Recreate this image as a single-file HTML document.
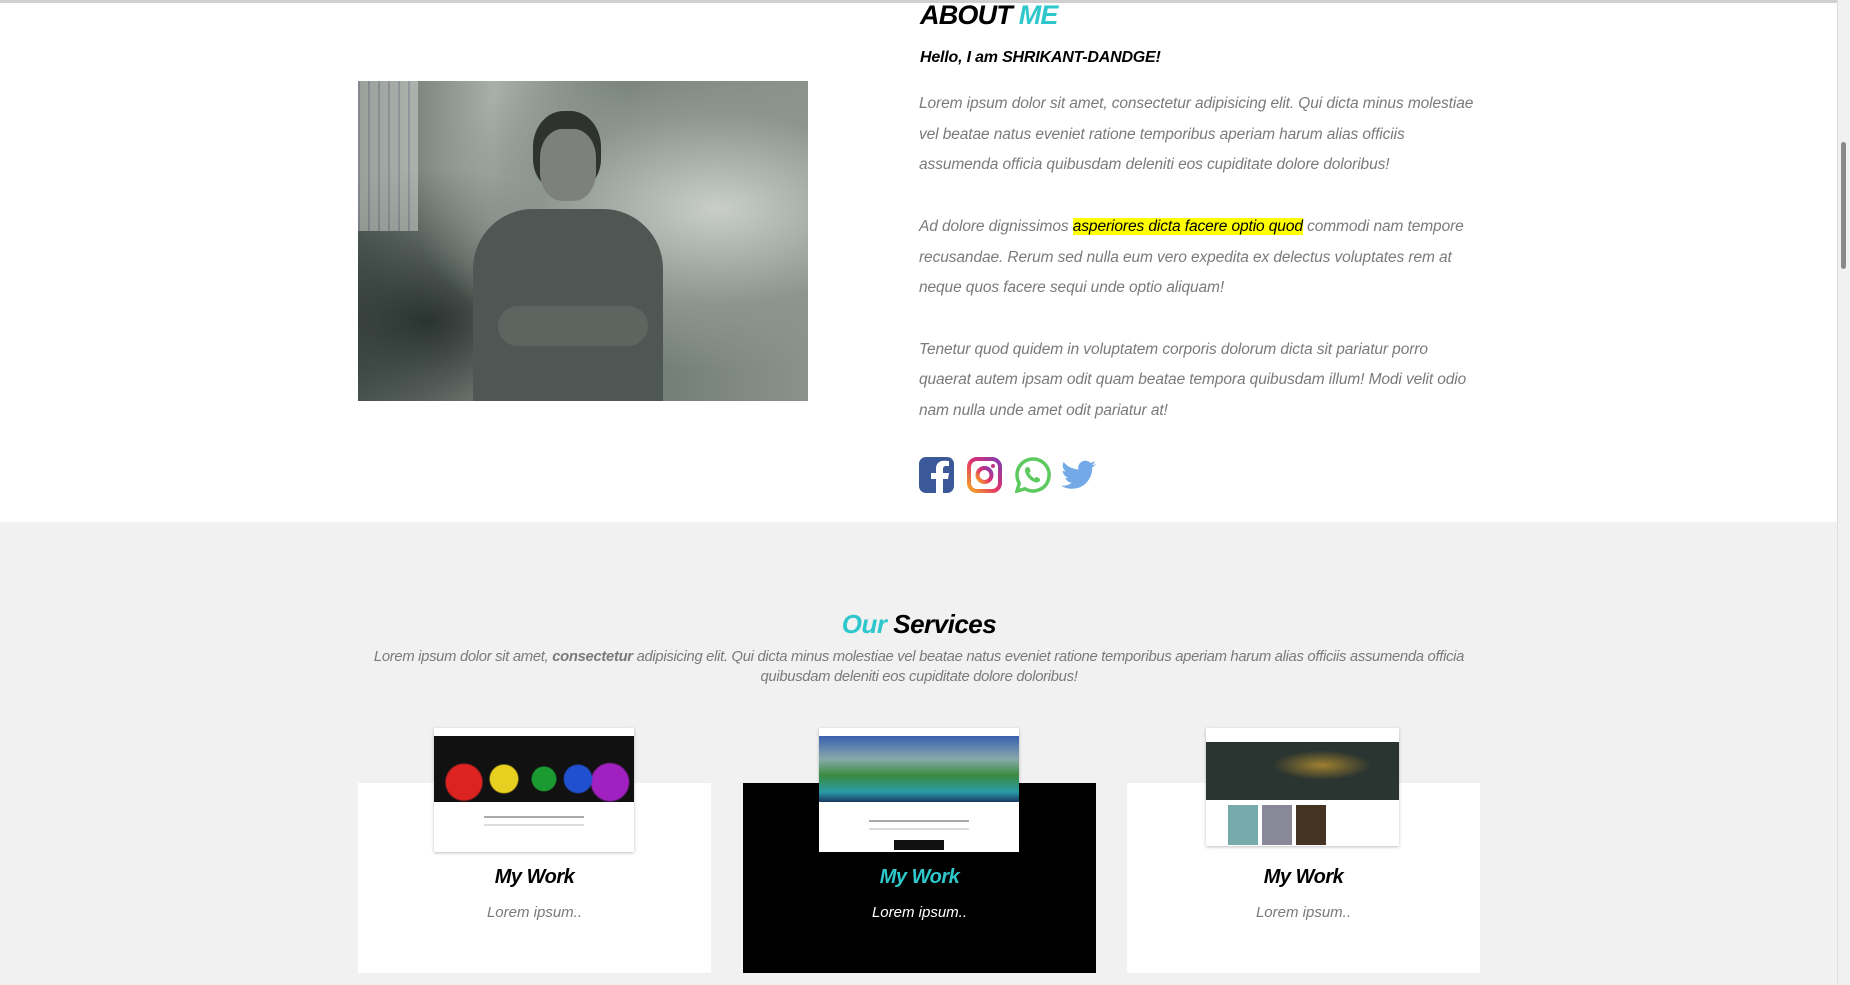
<!DOCTYPE html>
<html><head><meta charset="utf-8"><style>
*{margin:0;padding:0;box-sizing:border-box}
body{width:1850px;height:985px;overflow:hidden;background:#f1f1f1;font-family:"Liberation Sans",sans-serif;position:relative}
.top{position:absolute;left:0;top:0;width:1837px;height:522px;background:#fff;border-top:3px solid #d0d0d0}
.rb{position:absolute;left:1837px;top:0;width:13px;height:985px;background:#f1f1f1;border-left:1px solid #ddd}
.thumb{position:absolute;left:1841px;top:142px;width:5px;height:127px;background:#8a8a8a;border-radius:3px}
.photo{position:absolute;left:358px;top:81px;width:450px;height:320px;overflow:hidden;
background:radial-gradient(ellipse at 80% 40%,#c9cfc8 0,#8d9590 35%,transparent 60%),radial-gradient(ellipse at 15% 75%,#2a3330 0,transparent 45%),linear-gradient(90deg,#5c6661 0,#a8afa9 30%,#6f7974 60%,#8a928d 100%)}
h2{position:absolute;left:920px;top:0;font-size:27px;font-style:italic;font-weight:bold;color:#000;letter-spacing:-0.8px}
h2 span{color:#2ec8cc}
.hello{position:absolute;left:920px;top:49px;font-size:16px;font-style:italic;font-weight:bold;color:#000;letter-spacing:-0.2px}
.txt{position:absolute;left:919px;top:89px;width:562px;font-size:15.5px;font-style:italic;color:#7a7a7a;line-height:30.7px;letter-spacing:-0.1px}
.txt p{margin-bottom:30.7px}
mark{background:#ffff00;color:#000}
.icons{position:absolute;left:919px;top:457px}
.icons svg{position:absolute;top:0}
.st{position:absolute;left:358px;width:1122px;text-align:center}
.st1{top:609px;font-size:26px;font-style:italic;font-weight:bold;color:#000;letter-spacing:-0.5px}
.st1 span{color:#2ec8cc}
.st2{top:647px;font-size:14.8px;font-style:italic;color:#7a7a7a;line-height:20px;letter-spacing:-0.3px}
.card{position:absolute;top:783px;width:353px;height:190px;background:#fff;text-align:center}
.card.dark{background:#000}
.card h3{position:absolute;top:83px;width:100%;font-size:20px;font-style:italic;font-weight:bold;color:#000;letter-spacing:-0.5px}
.card.dark h3{color:#2ec8cc}
.card p{position:absolute;top:121px;width:100%;font-size:15px;font-style:italic;color:#7a7a7a}
.card.dark p{color:#fff}
.shot{position:absolute;top:728px;width:200px;height:124px;background:#fff;box-shadow:0 1px 3px rgba(0,0,0,.25)}
.shot .hero{position:absolute;left:0;top:8px;width:100%;height:66px}
.shot .l{position:absolute;height:2px;background:#aaa;left:25%;width:50%}
</style></head><body>
<div class="top"></div>
<div class="rb"></div><div class="thumb"></div>
<div class="photo">
 <div style="position:absolute;left:0;top:0;width:60px;height:150px;background:repeating-linear-gradient(90deg,#aab 0 2px,#d8dcd8 2px 10px);opacity:.5"></div>
 <div style="position:absolute;left:175px;top:30px;width:68px;height:80px;border-radius:45% 45% 40% 40%;background:#2e3330"></div>
 <div style="position:absolute;left:182px;top:48px;width:56px;height:72px;border-radius:40%;background:#7d807c"></div>
 <div style="position:absolute;left:115px;top:128px;width:190px;height:200px;border-radius:60px 60px 0 0;background:#4f5754"></div>
 <div style="position:absolute;left:140px;top:225px;width:150px;height:40px;border-radius:20px;background:#5e6561"></div>
</div>
<h2>ABOUT <span>ME</span></h2>
<div class="hello">Hello, I am SHRIKANT-DANDGE!</div>
<div class="txt">
<p>Lorem ipsum dolor sit amet, consectetur adipisicing elit. Qui dicta minus molestiae<br>vel beatae natus eveniet ratione temporibus aperiam harum alias officiis<br>assumenda officia quibusdam deleniti eos cupiditate dolore doloribus!</p>
<p>Ad dolore dignissimos <mark>asperiores dicta facere optio quod</mark> commodi nam tempore<br>recusandae. Rerum sed nulla eum vero expedita ex delectus voluptates rem at<br>neque quos facere sequi unde optio aliquam!</p>
<p>Tenetur quod quidem in voluptatem corporis dolorum dicta sit pariatur porro<br>quaerat autem ipsam odit quam beatae tempora quibusdam illum! Modi velit odio<br>nam nulla unde amet odit pariatur at!</p>
</div>
<div class="icons">
<svg style="left:0" width="35" height="36" viewBox="0 0 35 36"><rect x="0" y="0" width="35" height="36" rx="7" fill="#3b5998"/><path d="M24 36V22h5l1-6h-6v-4c0-2 1-3 3-3h3V4c-1 0-3-.3-5-.3-5 0-8 3-8 8V16h-5v6h5v14z" fill="#fff"/></svg>
<svg style="left:48px" width="35" height="36" viewBox="0 0 35 36"><defs><linearGradient id="ig" x1="0" y1="1" x2="1" y2="0"><stop offset="0" stop-color="#f5a623"/><stop offset=".5" stop-color="#e1306c"/><stop offset="1" stop-color="#833ab4"/></linearGradient></defs><rect x="2" y="2" width="31" height="32" rx="8" fill="none" stroke="url(#ig)" stroke-width="4"/><circle cx="17.5" cy="18" r="7" fill="none" stroke="url(#ig)" stroke-width="4"/><circle cx="26" cy="9" r="2" fill="#c13584"/></svg>
<svg style="left:96px" width="36" height="36" viewBox="0 0 36 36"><path d="M18 2a16 16 0 0 0-13.7 24.3L2 34l8-2.2A16 16 0 1 0 18 2z" fill="none" stroke="#5dca5f" stroke-width="3.5"/><path d="M12 10c-1 0-2 2-2 3.5 0 4 5 11 11.5 12 1.5 0 3.5-1 3.5-2.5l-.3-1.5-3.5-1.7-1.5 1.7c-2-1-4.5-3.3-5.5-5.5l1.5-1.7-1.5-3.8z" fill="#5dca5f"/></svg>
<svg style="left:142px;top:3px" width="36" height="32" viewBox="0 0 36 32"><path d="M35 4c-1.3.6-2.7 1-4.1 1.1 1.5-.9 2.6-2.3 3.1-3.9-1.4.8-2.9 1.4-4.5 1.7A7.1 7.1 0 0 0 17.4 9.4 20.2 20.2 0 0 1 2.7 2 7.1 7.1 0 0 0 4.9 11.5a7 7 0 0 1-3.2-.9c0 3.4 2.4 6.3 5.7 7a7 7 0 0 1-3.2.1 7.1 7.1 0 0 0 6.6 4.9A14.3 14.3 0 0 1 0 25.6 20.1 20.1 0 0 0 10.9 28.8c13.1 0 20.3-10.9 20.3-20.3v-.9C32.6 6.6 33.9 5.3 35 4z" fill="#74a9e8"/></svg>
</div>
<div class="st st1"><span>Our</span> Services</div>
<div class="st st2">Lorem ipsum dolor sit amet, <b>consectetur</b> adipisicing elit. Qui dicta minus molestiae vel beatae natus eveniet ratione temporibus aperiam harum alias officiis assumenda officia quibusdam deleniti eos cupiditate dolore doloribus!</div>
<div class="card" style="left:358px"><h3>My Work</h3><p>Lorem ipsum..</p></div>
<div class="card dark" style="left:743px"><h3>My Work</h3><p>Lorem ipsum..</p></div>
<div class="card" style="left:1127px"><h3>My Work</h3><p>Lorem ipsum..</p></div>
<div class="shot" style="left:434px"><div class="hero" style="background:radial-gradient(circle at 15% 70%,#d22 0 10%,transparent 11%),radial-gradient(circle at 35% 65%,#e8d020 0 10%,transparent 11%),radial-gradient(circle at 55% 65%,#1a9a30 0 10%,transparent 11%),radial-gradient(circle at 72% 65%,#2050d0 0 9%,transparent 10%),radial-gradient(circle at 88% 70%,#a020c0 0 10%,transparent 11%),#111"></div><div class="l" style="top:88px"></div><div class="l" style="top:96px;background:#ddd"></div></div>
<div class="shot" style="left:819px"><div class="hero" style="background:linear-gradient(180deg,#3a60b0 0,#8aa 35%,#3a8a40 60%,#2a9aa8 85%,#1a3a60 100%)"></div><div class="l" style="top:92px"></div><div class="l" style="top:100px;background:#ddd"></div><div style="position:absolute;left:75px;top:112px;width:50px;height:10px;background:#111"></div></div>
<div class="shot" style="left:1206px;width:193px;height:118px"><div class="hero" style="top:14px;height:58px;background:radial-gradient(ellipse at 60% 40%,#a08030 0,transparent 30%),#2a3430"></div><div style="position:absolute;left:22px;top:77px;width:30px;height:40px;background:#7aa"></div><div style="position:absolute;left:56px;top:77px;width:30px;height:40px;background:#889"></div><div style="position:absolute;left:90px;top:77px;width:30px;height:40px;background:#432"></div></div>
</body></html>
